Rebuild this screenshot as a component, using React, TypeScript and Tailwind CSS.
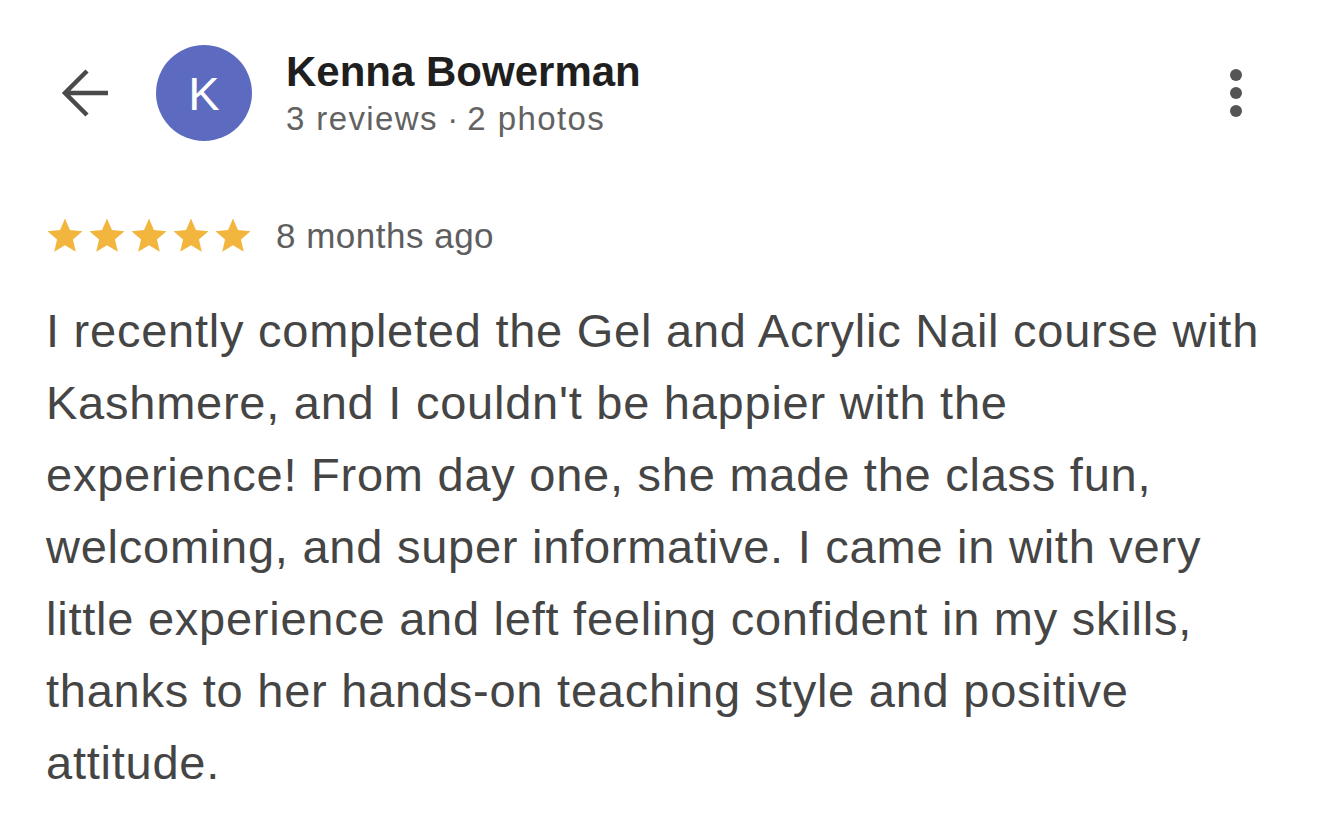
import React from "react";

const reviewLines = [
  "I recently completed the Gel and Acrylic Nail course with",
  "Kashmere, and I couldn't be happier with the",
  "experience! From day one, she made the class fun,",
  "welcoming, and super informative. I came in with very",
  "little experience and left feeling confident in my skills,",
  "thanks to her hands-on teaching style and positive",
  "attitude.",
];

const Star = () => (
  <svg width="42" height="42" viewBox="0 0 24 24" className="shrink-0">
    <path
      d="M12 17.27L18.18 21l-1.64-7.03L22 9.24l-7.19-.61L12 2 9.19 8.63 2 9.24l5.46 4.73L5.82 21z"
      fill="#f2b63e"
    />
  </svg>
);

const App = () => {
  return (
    <div className="min-h-[840px] w-full bg-white font-['Liberation_Sans',Arial,sans-serif]">
      {/* header */}
      <div className="flex items-center pt-[45px] pl-[58px] pr-[72px]">
        <svg width="52" height="48" viewBox="0 0 52 48" className="shrink-0">
          <path
            d="M29 2 L7 24 L29 46 M7 24 H50"
            fill="none"
            stroke="#4a4a4a"
            strokeWidth="4.5"
          />
        </svg>
        <div className="ml-[46px] flex h-[96px] w-[96px] shrink-0 items-center justify-center rounded-full bg-[#5c6bc0]">
          <span className="text-[47px] leading-none text-white">K</span>
        </div>
        <div className="ml-[34px] flex flex-col">
          <div className="text-[42px] font-bold leading-[48px] text-[#1f1f1f]">
            Kenna Bowerman
          </div>
          <div className="mt-[3px] text-[33px] leading-[40px] tracking-[1.4px] text-[#626262]">
            3 reviews<span className="tracking-normal"> · </span>2 photos
          </div>
        </div>
        <svg width="24" height="48" viewBox="0 0 24 48" className="ml-auto shrink-0">
          <circle cx="12" cy="6" r="6" fill="#555555" />
          <circle cx="12" cy="24" r="6" fill="#555555" />
          <circle cx="12" cy="42" r="6" fill="#555555" />
        </svg>
      </div>

      {/* rating */}
      <div className="mt-[74px] flex items-center pl-[44px]">
        <div className="flex">
          <Star />
          <Star />
          <Star />
          <Star />
          <Star />
        </div>
        <span className="ml-[22px] text-[35px] leading-[40px] tracking-[0.5px] text-[#5e5e5e]">
          8 months ago
        </span>
      </div>

      {/* review body */}
      <div className="mt-[38px] pl-[46px] text-[47px] leading-[72px] tracking-[0.75px] text-[#454545]">
        {reviewLines.map((line, i) => (
          <div key={i} className="whitespace-nowrap">
            {line}
          </div>
        ))}
      </div>
    </div>
  );
};

export default App;
